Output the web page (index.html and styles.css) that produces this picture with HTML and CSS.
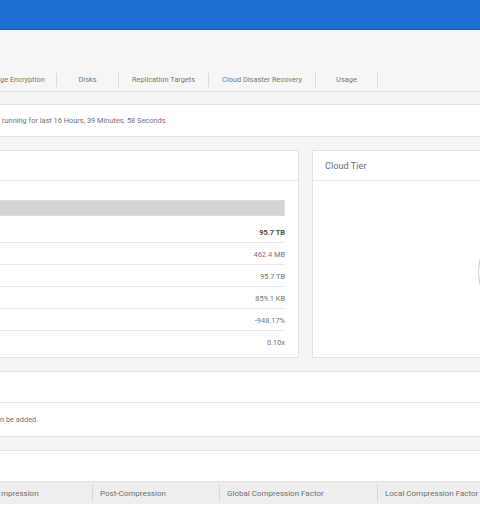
FILE: index.html
```html
<!DOCTYPE html>
<html>
<head>
<meta charset="utf-8">
<link rel="stylesheet" href="styles.css">
</head>
<body>
<header class="topbar"></header>
<nav class="tabbar">
  <div class="tabs">
    <div class="tab first">ge Encryption</div>
    <div class="tab">Disks</div>
    <div class="tab">Replication Targets</div>
    <div class="tab">Cloud Disaster Recovery</div>
    <div class="tab">Usage</div>
  </div>
</nav>
<main class="content">
  <section class="card status">
    <div class="status-text">running for last 16 Hours, 39 Minutes, 58 Seconds</div>
  </section>
  <div class="two-col">
    <section class="card active-tier">
      <div class="card-head"></div>
      <div class="card-body">
        <div class="bar"></div>
        <div class="stats">
          <div class="stat"><span class="val bold">95.7 TB</span></div>
          <div class="stat"><span class="val">462.4 MB</span></div>
          <div class="stat"><span class="val">95.7 TB</span></div>
          <div class="stat"><span class="val">859.1 KB</span></div>
          <div class="stat"><span class="val">-948.17%</span></div>
          <div class="stat"><span class="val">0.10x</span></div>
        </div>
      </div>
    </section>
    <section class="card cloud-tier">
      <div class="card-head"><span class="title">Cloud Tier</span></div>
      <div class="card-body chart-body">
        <div class="ring"></div>
      </div>
    </section>
  </div>
  <section class="card note">
    <div class="card-head"></div>
    <div class="note-body"><span class="note-text">n be added.</span></div>
  </section>
  <section class="card table-card">
    <div class="table-top"></div>
    <div class="thead">
      <div class="th c1"><span>mpression</span></div>
      <div class="th c2"><span>Post-Compression</span></div>
      <div class="th c3"><span>Global Compression Factor</span></div>
      <div class="th c4"><span>Local Compression Factor</span></div>
    </div>
    <div class="trow"></div>
  </section>
</main>
</body>
</html>
```
FILE: styles.css
```css
* { box-sizing: border-box; }
html, body {
  margin: 0;
  padding: 0;
}
body {
  width: 480px;
  height: 515px;
  overflow: hidden;
  background: #f5f5f5;
  font-family: Roboto, "Liberation Sans", sans-serif;
  color: #737373;
  font-size: 7.4px;
}
.topbar {
  height: 30px;
  background: #1b70d1;
  border-bottom: 1px solid #1560b9;
}
.tabbar {
  height: 62px;
  background: #f6f6f6;
  border-bottom: 1px solid #dcdcdc;
  padding-top: 43px;
  overflow: hidden;
}
.tabs {
  display: flex;
  height: 14px;
}
.tab {
  min-width: 62px;
  padding: 0 13px;
  border-right: 1px solid #d9d9d9;
  text-align: center;
  line-height: 14px;
  white-space: nowrap;
  color: #787878;
}
.tab.first {
  min-width: 0;
  width: 57px;
  padding: 0;
  text-align: left;
}
.content {
  padding-top: 12px;
  display: flex;
  flex-direction: column;
  gap: 13px;
}
.card {
  background: #fff;
  border: 1px solid #e2e2e2;
}
.status {
  margin: 0 -2px;
  height: 33px;
  display: flex;
  align-items: center;
  padding-left: 3px;
}
.two-col {
  display: flex;
  gap: 13px;
  margin-left: -20px;
  margin-right: -30px;
}
.active-tier { width: 319px; height: 208px; flex: none; }
.cloud-tier { flex: 1; height: 208px; }
.card-head {
  height: 30px;
  border-bottom: 1px solid #e6e6e6;
  display: flex;
  align-items: center;
  padding-left: 12px;
}
.title {
  font-size: 9.2px;
  color: #6e6e6e;
}
.active-tier .card-body {
  padding: 19px 13px 0 18px;
}
.bar {
  height: 16px;
  background: #d3d3d5;
  border: 1px solid #dcdcde;
  margin-bottom: 5px;
}
.stat {
  height: 22px;
  border-bottom: 1px solid #e8e8e8;
  display: flex;
  align-items: center;
  justify-content: flex-end;
  padding-top: 1px;
}
.stat:last-child { border-bottom: none; }
.val.bold { font-weight: 700; color: #4d4d4d; }
.chart-body {
  display: flex;
  padding: 34px 0 0 165px;
  height: 176px;
  overflow: hidden;
}
.ring {
  flex: none;
  width: 114px;
  height: 114px;
  border-radius: 50%;
  border: 1.5px solid #cfcfcf;
}
.note {
  margin: 0 -2px;
  height: 66px;
}
.note .card-head { height: 31px; }
.note-body {
  height: 33px;
  display: flex;
  align-items: center;
  padding-left: 1px;
}
.note-text { white-space: nowrap; }
.table-card {
  margin: 0 -2px;
  height: 80px;
  overflow: hidden;
}
.table-top { height: 30px; }
.thead {
  height: 23px;
  background: #eeeeee;
  border-top: 1px solid #e2e2e2;
  display: flex;
  align-items: center;
  font-size: 8px;
}
.th {
  flex: none;
  height: 18px;
  display: flex;
  align-items: center;
  padding-left: 7px;
  border-right: 1px solid #d8d8d8;
  white-space: nowrap;
  color: #6e6e6e;
}
.c1 { width: 94px; padding-left: 2px; }
.c2 { width: 127px; }
.c3 { width: 158px; }
.c4 { width: 110px; border-right: none; }
.trow { height: 30px; background: #fff; }
```
